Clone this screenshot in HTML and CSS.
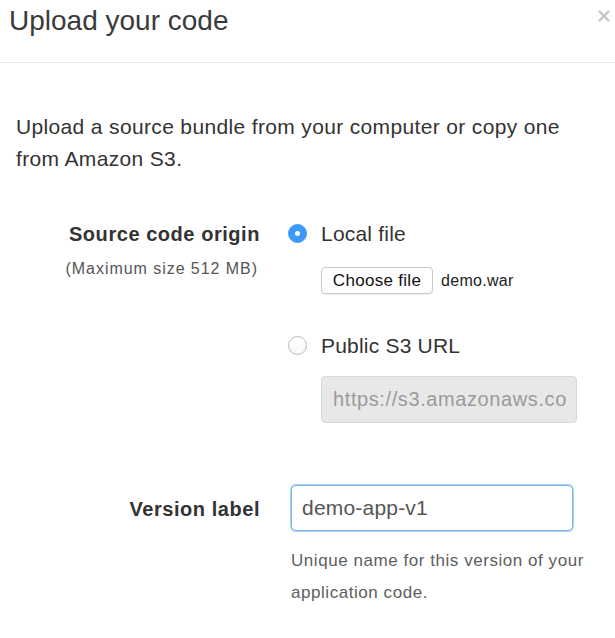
FILE: index.html
```html
<!DOCTYPE html>
<html>
<head>
<meta charset="utf-8">
<link rel="stylesheet" href="styles.css">
</head>
<body>
<div class="modal">
  <div class="modal-header">
    <h1 class="title">Upload your code</h1>
    <svg class="close" width="12" height="12" viewBox="0 0 12 12" aria-label="Close">
      <path d="M1.5 1.5 L10.5 10.5 M10.5 1.5 L1.5 10.5" stroke="#c4c4c4" stroke-width="2.4" stroke-linecap="round"/>
    </svg>
  </div>
  <div class="modal-body">
    <p class="intro">Upload a source bundle from your computer or copy one from Amazon S3.</p>
    <div class="form-row origin-row">
      <div class="label-col">
        <div class="label">Source code origin</div>
        <div class="sublabel">(Maximum size 512 MB)</div>
      </div>
      <div class="field-col">
        <div class="radio-line">
          <span class="radio checked"></span>
          <span class="radio-text">Local file</span>
        </div>
        <div class="file-line">
          <button class="file-btn" type="button">Choose file</button>
          <span class="file-name">demo.war</span>
        </div>
        <div class="radio-line second">
          <span class="radio"></span>
          <span class="radio-text">Public S3 URL</span>
        </div>
        <input class="url-input" type="text" disabled value="https://s3.amazonaws.com/">
      </div>
    </div>
    <div class="form-row version-row">
      <div class="label-col">
        <div class="label version-label">Version label</div>
      </div>
      <div class="field-col">
        <input class="text-input" type="text" value="demo-app-v1">
        <div class="help">Unique name for this version of your application code.</div>
      </div>
    </div>
  </div>
</div>
</body>
</html>
```
FILE: styles.css
```css
* { box-sizing: border-box; }
html, body { margin: 0; padding: 0; background: #fff; }
body {
  font-family: "Liberation Sans", Arial, sans-serif;
  color: #333;
  width: 615px;
  height: 638px;
  overflow: hidden;
}
.modal-header {
  height: 63px;
  border-bottom: 1px solid #e9e9e9;
  display: flex;
  justify-content: space-between;
  align-items: flex-start;
  padding: 3px 5px 0 9px;
}
.title {
  margin: 0;
  font-size: 28px;
  font-weight: normal;
  line-height: 36px;
  color: #3a3a3a;
}
.close {
  margin-top: 7px;
  display: block;
}
.modal-body {
  padding: 48px 16px 0 16px;
}
.intro {
  margin: 0;
  font-size: 21px;
  letter-spacing: 0.35px;
  line-height: 32px;
  color: #333;
  width: 560px;
}
.form-row {
  display: grid;
  grid-template-columns: 243px 1fr;
  column-gap: 29px;
}
.origin-row { margin-top: 44px; }
.version-row { margin-top: 62px; }
.label-col { text-align: right; }
.label {
  font-weight: bold;
  font-size: 20px;
  letter-spacing: 0.55px;
  line-height: 30px;
  color: #333;
  margin-right: -1px;
}
.version-label { padding-top: 9px; }
.sublabel {
  font-size: 16px;
  letter-spacing: 0.95px;
  color: #555;
  line-height: 20px;
  margin-top: 10px;
  margin-right: 1px;
}
.field-col {
  display: flex;
  flex-direction: column;
  align-items: flex-start;
}
.radio-line {
  display: flex;
  align-items: center;
  height: 30px;
}
.radio-line.second { margin-top: 37px; }
.radio {
  width: 19px;
  height: 19px;
  border-radius: 50%;
  border: 1px solid #bcbcbc;
  background: linear-gradient(#fff, #f7f7f7);
  margin-right: 14px;
  margin-top: -2px;
  position: relative;
  flex: none;
}
.radio.checked {
  border-color: #3b99fc;
  background: #3b99fc;
}
.radio.checked::after {
  content: "";
  position: absolute;
  left: 6px;
  top: 6px;
  width: 5px;
  height: 5px;
  border-radius: 50%;
  background: #fff;
}
.radio-text {
  font-size: 21px;
  letter-spacing: 0.2px;
  color: #333;
}
.file-line {
  margin-top: 18px;
  margin-left: 33px;
  display: flex;
  align-items: center;
}
.file-btn {
  height: 27px;
  width: 112px;
  border: 1px solid #cacaca;
  border-radius: 4px;
  font-family: "Liberation Sans", Arial, sans-serif;
  font-size: 17px;
  letter-spacing: 0.3px;
  color: #111;
  background: #fff;
  padding: 0;
  margin: 0;
  box-shadow: 0 1px 1px rgba(0,0,0,0.06);
}
.file-name {
  margin-left: 8px;
  font-size: 16px;
  letter-spacing: 0.3px;
  color: #222;
}
.url-input {
  margin: 15px 0 0 33px;
  width: 256px;
  height: 47px;
  border: 1px solid #d8d8d8;
  border-radius: 4px;
  background: #e8e8e8;
  padding: 0 10px 0 11px;
  font-family: "Liberation Sans", Arial, sans-serif;
  font-size: 20px;
  letter-spacing: 0.6px;
  color: #9b9b9b;
  -webkit-text-fill-color: #9b9b9b;
  opacity: 1;
  outline: none;
}
.text-input {
  margin: 0 0 0 3px;
  width: 282px;
  height: 46px;
  border: 1px solid #7fb6f2;
  box-shadow: 0 0 0 1px #a9cdf6;
  border-radius: 5px;
  font-family: "Liberation Sans", Arial, sans-serif;
  font-size: 21px;
  letter-spacing: 0.2px;
  padding: 0 0 0 10px;
  color: #555;
  background: #fff;
  outline: none;
}
.help {
  margin-left: 3px;
  margin-top: 14px;
  font-size: 17px;
  letter-spacing: 0.55px;
  line-height: 32px;
  color: #5e5e5e;
  width: 310px;
}
```
